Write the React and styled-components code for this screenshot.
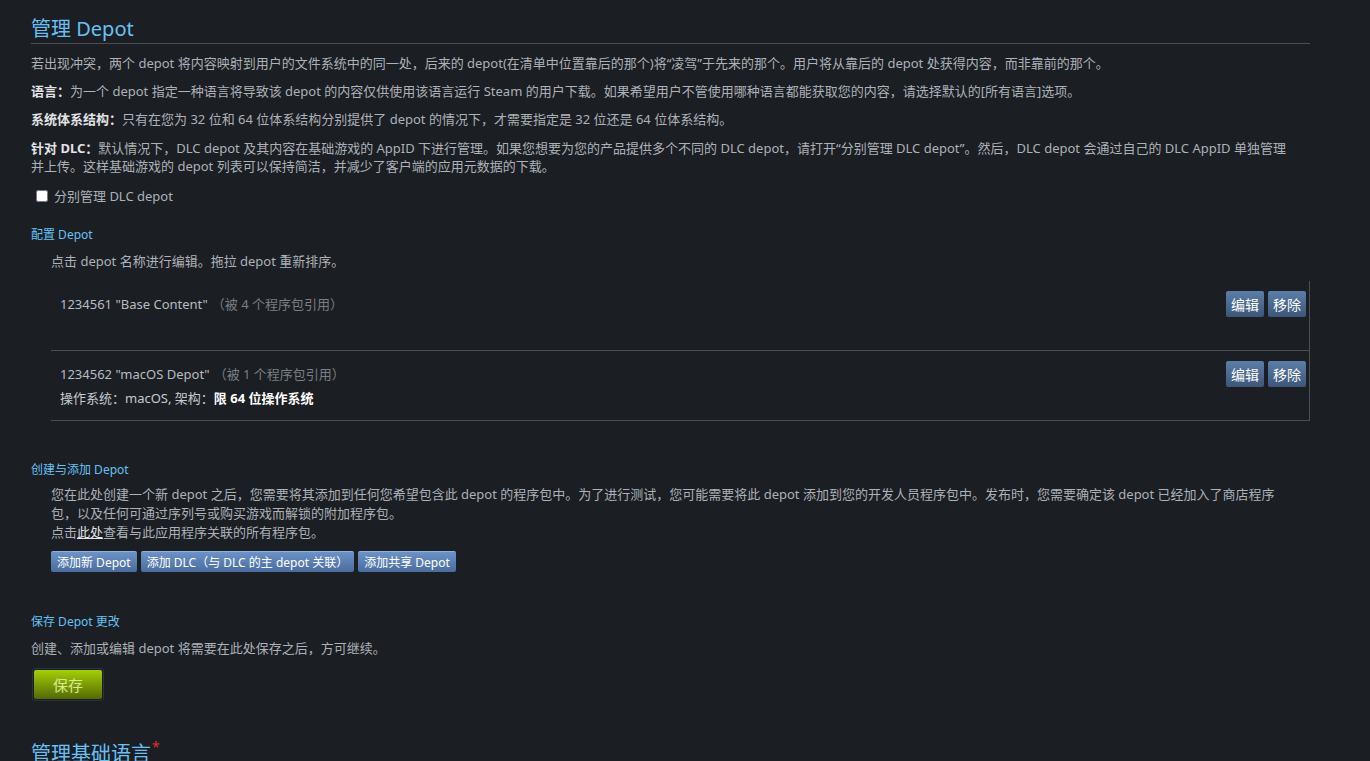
import React from 'react'
import styled, { createGlobalStyle } from 'styled-components'

const Global = createGlobalStyle`
  html, body {
    margin: 0;
    padding: 0;
    background: #1b1e23;
  }
  body {
    font-family: "Noto Sans", "Noto Sans CJK SC", sans-serif;
    color: #acb2b8;
    overflow: hidden;
  }
`

const Page = styled.div`
  width: 1279px;
  padding: 15px 0 0 31px;
`

const Title = styled.h1`
  margin: 0;
  font-size: 20px;
  font-weight: normal;
  line-height: 28px;
  color: #67c1f5;
  border-bottom: 1px solid #4b4f55;
  padding-bottom: 0;
  sup {
    color: #e02f2f;
    font-size: 14px;
    vertical-align: top;
    line-height: 14px;
    margin-left: 1px;
  }
`

const Para = styled.p`
  margin: ${(p) => p.$top || 10}px 0 0 ${(p) => p.$indent || 0}px;
  padding-right: 22px;
  font-size: 13px;
  line-height: ${(p) => p.$lh || 18}px;
  color: #acb2b8;
  b {
    color: #e2e4e6;
  }
`

const CheckRow = styled.label`
  display: flex;
  align-items: center;
  gap: 6px;
  margin-top: 12px;
  font-size: 13px;
  line-height: 18px;
  input {
    margin: 0 0 0 5px;
    width: 12px;
    height: 12px;
  }
`

const SectionHead = styled.h3`
  margin: ${(p) => p.$top}px 0 0;
  font-size: 12px;
  font-weight: normal;
  line-height: 18px;
  color: #67c1f5;
`

const DepotList = styled.div`
  margin: 11px 0 0 20px;
  border-right: 1px solid #4b4f55;
`

const DepotRow = styled.div`
  display: flex;
  justify-content: space-between;
  align-items: flex-start;
  min-height: 50px;
  padding: 10px 3px 9px 9px;
  border-bottom: 1px solid #4b4f55;
`

const DepotInfo = styled.div`
  font-size: 13px;
`

const DepotName = styled.div`
  line-height: 26px;
  color: #b8bcc0;
  span {
    color: #7a7f85;
    margin-left: 4px;
  }
`

const DepotMeta = styled.div`
  line-height: 22px;
  color: #c6cbd0;
  b {
    color: #ffffff;
  }
`

const RowButtons = styled.div`
  display: flex;
  gap: 4px;
`

const SmallButton = styled.button`
  height: 26px;
  padding: 0 5px;
  border: none;
  border-radius: 2px;
  background: linear-gradient(180deg, #5b7ea8 0%, #3d5678 100%);
  color: #ffffff;
  font-family: inherit;
  font-size: 14px;
  cursor: pointer;
`

const LinkText = styled.a`
  color: #e2e4e6;
  text-decoration: underline;
`

const ButtonRow = styled.div`
  display: flex;
  gap: 4px;
  margin: 9px 0 0 20px;
`

const AddButton = styled.button`
  height: 21px;
  padding: 0 6px;
  border: none;
  border-top: 1px solid #8fb0dc;
  border-radius: 2px;
  background: linear-gradient(180deg, #6c92c6 0%, #4a6c9e 100%);
  color: #ffffff;
  font-family: inherit;
  font-size: 12px;
  line-height: 19px;
  cursor: pointer;
`

const SaveWrap = styled.div`
  display: inline-block;
  margin: 11px 0 0 1px;
  padding: 1px;
  border: 1px solid #2c323a;
  border-radius: 3px;
`

const SaveButton = styled.button`
  display: block;
  width: 68px;
  height: 29px;
  border: none;
  border-radius: 2px;
  background: linear-gradient(180deg, #a4d007 0%, #536904 100%);
  color: #d6ea8e;
  font-family: inherit;
  font-size: 15px;
  cursor: pointer;
`

const BottomTitle = styled(Title)`
  margin-top: 39px;
  border-bottom: none;
`

export default function App() {
  return (
    <Page>
      <Global />
      <Title>管理 Depot</Title>
      <Para $top={10}>若出现冲突，两个 depot 将内容映射到用户的文件系统中的同一处，后来的 depot(在清单中位置靠后的那个)将“凌驾”于先来的那个。用户将从靠后的 depot 处获得内容，而非靠前的那个。</Para>
      <Para><b>语言：</b>为一个 depot 指定一种语言将导致该 depot 的内容仅供使用该语言运行 Steam 的用户下载。如果希望用户不管使用哪种语言都能获取您的内容，请选择默认的[所有语言]选项。</Para>
      <Para><b>系统体系结构：</b>只有在您为 32 位和 64 位体系结构分别提供了 depot 的情况下，才需要指定是 32 位还是 64 位体系结构。</Para>
      <Para $top={11}><b>针对 DLC：</b>默认情况下，DLC depot 及其内容在基础游戏的 AppID 下进行管理。如果您想要为您的产品提供多个不同的 DLC depot，请打开“分别管理 DLC depot”。然后，DLC depot 会通过自己的 DLC AppID 单独管理并上传。这样基础游戏的 depot 列表可以保持简洁，并减少了客户端的应用元数据的下载。</Para>
      <CheckRow>
        <input type="checkbox" />
        分别管理 DLC depot
      </CheckRow>

      <SectionHead $top={21}>配置 Depot</SectionHead>
      <Para $top={8} $indent={20}>点击 depot 名称进行编辑。拖拉 depot 重新排序。</Para>
      <DepotList>
        <DepotRow>
          <DepotInfo>
            <DepotName>1234561 "Base Content"<span>（被 4 个程序包引用）</span></DepotName>
          </DepotInfo>
          <RowButtons>
            <SmallButton>编辑</SmallButton>
            <SmallButton>移除</SmallButton>
          </RowButtons>
        </DepotRow>
        <DepotRow>
          <DepotInfo>
            <DepotName>1234562 "macOS Depot"<span>（被 1 个程序包引用）</span></DepotName>
            <DepotMeta>操作系统：macOS, 架构：<b>限 64 位操作系统</b></DepotMeta>
          </DepotInfo>
          <RowButtons>
            <SmallButton>编辑</SmallButton>
            <SmallButton>移除</SmallButton>
          </RowButtons>
        </DepotRow>
      </DepotList>

      <SectionHead $top={40}>创建与添加 Depot</SectionHead>
      <Para $top={6} $indent={20} $lh={19}>
        您在此处创建一个新 depot 之后，您需要将其添加到任何您希望包含此 depot 的程序包中。为了进行测试，您可能需要将此 depot 添加到您的开发人员程序包中。发布时，您需要确定该 depot 已经加入了商店程序包，以及任何可通过序列号或购买游戏而解锁的附加程序包。
        <br />
        点击<LinkText>此处</LinkText>查看与此应用程序关联的所有程序包。
      </Para>
      <ButtonRow>
        <AddButton>添加新 Depot</AddButton>
        <AddButton>添加 DLC（与 DLC 的主 depot 关联）</AddButton>
        <AddButton>添加共享 Depot</AddButton>
      </ButtonRow>

      <SectionHead $top={41}>保存 Depot 更改</SectionHead>
      <Para $top={8}>创建、添加或编辑 depot 将需要在此处保存之后，方可继续。</Para>
      <SaveWrap>
        <SaveButton>保存</SaveButton>
      </SaveWrap>

      <BottomTitle>管理基础语言<sup>*</sup></BottomTitle>
    </Page>
  )
}
